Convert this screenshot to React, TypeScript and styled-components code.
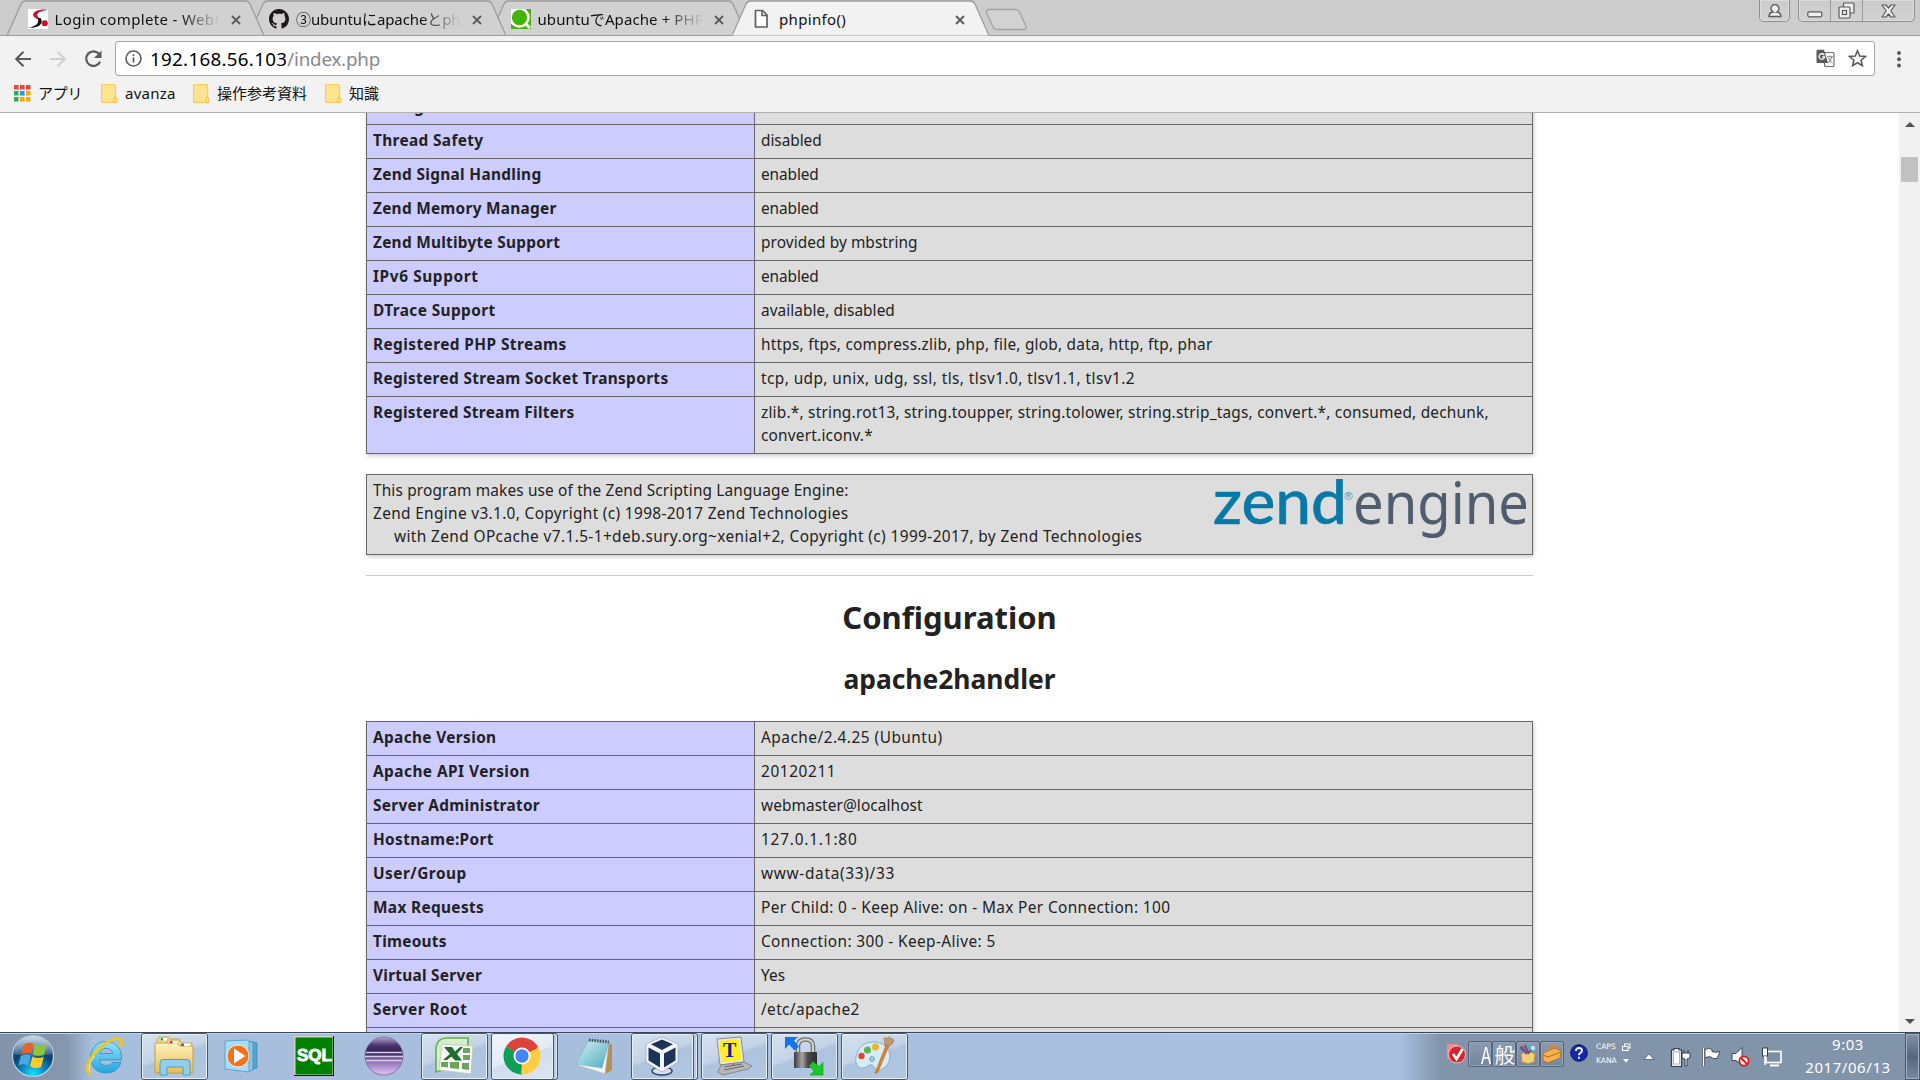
import React from "react";
import styled, { createGlobalStyle } from "styled-components";

const GlobalStyle = createGlobalStyle`
  * { box-sizing: border-box; }
  html, body { margin: 0; padding: 0; background: #fff; }
  body { width: 1920px; height: 1080px; overflow: hidden; font-family: "Noto Sans", "Noto Sans CJK JP", sans-serif; }
  svg { display: block; flex: none; }
`;

const Screen = styled.div`
  width: 1920px;
  height: 1080px;
  display: flex;
  flex-direction: column;
  overflow: hidden;
`;

/* ---------- tab strip ---------- */

const TabStrip = styled.div`
  height: 36px;
  flex: none;
  display: flex;
  align-items: flex-start;
  background: #cccccc;
  box-shadow: inset 0 -1px 0 #9c9c9c;
  padding-left: 7px;
`;

const TabBox = styled.div<{ $z: number }>`
  position: relative;
  z-index: ${(p) => p.$z};
  width: 257px;
  height: 36px;
  margin-right: -15.5px;
  display: flex;
  align-items: center;
  padding: 1px 0 0 20.5px;
`;

const TabShape = styled.svg`
  position: absolute;
  inset: 0;
  z-index: -1;
`;

const TabTitle = styled.div<{ $track: number; $fade: boolean }>`
  width: 165px;
  margin-left: 7px;
  overflow: hidden;
  white-space: nowrap;
  font-size: 15px;
  line-height: 30px;
  letter-spacing: ${(p) => p.$track}px;
  color: #111;
  mask-image: ${(p) => (p.$fade ? "linear-gradient(90deg, #000 76%, transparent 100%)" : "none")};
`;

const TabClose = styled.svg`
  margin: 2px 0 0 11px;
`;

const NewTab = styled.svg`
  margin: 8px 0 0 10px;
`;

const StripSpacer = styled.div`
  flex: 1;
`;

const WindowButtons = styled.div<{ $gap: number }>`
  display: flex;
  height: 22px;
  margin-right: ${(p) => p.$gap}px;
  border: 1px solid #8f8f8f;
  border-top: 0;
  border-radius: 0 0 5px 5px;
  background: linear-gradient(#cbcbcb, #d2d2d2);
  box-shadow: inset 0 0 0 1px #dcdcdc;
`;

const WindowButton = styled.div<{ $w: number; $line?: boolean }>`
  width: ${(p) => p.$w}px;
  display: flex;
  align-items: center;
  justify-content: center;
  border-left: ${(p) => (p.$line ? "1px solid #9a9a9a" : "0")};
`;

/* ---------- toolbar ---------- */

const Toolbar = styled.div`
  height: 40px;
  flex: none;
  display: flex;
  align-items: flex-start;
  background: #f2f2f2;
  padding: 5px 0 0 14px;
`;

const NavIcon = styled.svg`
  margin: 8px 17px 0 0;

  &:last-of-type {
    margin-right: 12px;
  }
`;

const NavIcons = styled.div`
  display: flex;
`;

const Omnibox = styled.div`
  width: 1760px;
  height: 35px;
  display: flex;
  align-items: center;
  border: 1px solid #a6a6a6;
  border-radius: 3px;
  background: #fff;
  padding: 0 7px 0 9px;
`;

const Url = styled.div`
  flex: 1;
  margin-left: 8px;
  font-size: 18.75px;
  line-height: 32px;
  color: #888;
  letter-spacing: -0.2px;
`;

const Host = styled.span`
  color: #000;
  letter-spacing: 0.3px;
`;

const TranslateIcon = styled.svg`
  margin-right: 13px;
`;

const MenuDots = styled.svg`
  margin: 8px 0 0 21px;
`;

const Bookmarks = styled.div`
  height: 37px;
  flex: none;
  display: flex;
  align-items: center;
  background: #f2f2f2;
  border-bottom: 1px solid #b0b0b0;
  padding: 0 0 2px 14px;
`;

const Bookmark = styled.div<{ $w: number; $track?: number }>`
  width: ${(p) => p.$w}px;
  display: flex;
  align-items: center;
  gap: 7px;
  white-space: nowrap;
  font-size: 15px;
  line-height: 24px;
  letter-spacing: ${(p) => p.$track ?? 0}px;
  color: #111;
`;

/* ---------- page ---------- */

const Viewport = styled.div`
  height: 919px;
  flex: none;
  display: flex;
  overflow: hidden;
  background: #fff;
`;

const Page = styled.div`
  flex: 1;
  height: 919px;
  overflow: hidden;
  display: flex;
  flex-direction: column;
  align-items: center;
`;

const Content = styled.div`
  width: 1167px;
  margin-top: -23px;
  flex: none;
  color: #222;
`;

const InfoTable = styled.div`
  border: 1px solid #666;
  border-bottom: 0;
  box-shadow: 1px 2px 4px #ccc;
  display: flex;
  flex-direction: column;
`;

const InfoRow = styled.div`
  display: flex;
  border-bottom: 1px solid #666;
`;

const Label = styled.div<{ $track: number }>`
  width: 388px;
  flex: none;
  background: #ccccff;
  border-right: 1px solid #666;
  padding: 4px 6px 6px;
  font-size: 15.4px;
  line-height: 23px;
  font-weight: 700;
  letter-spacing: ${(p) => p.$track}px;
`;

const Value = styled.div<{ $track: number }>`
  flex: 1;
  background: #dddddd;
  padding: 4px 6px 6px;
  font-size: 15.4px;
  line-height: 23px;
  letter-spacing: ${(p) => p.$track}px;
`;

const ZendBox = styled.div`
  display: flex;
  justify-content: space-between;
  height: 81px;
  margin: 20px 0;
  padding: 4px 6px;
  border: 1px solid #666;
  background: #dddddd;
  box-shadow: 1px 2px 4px #ccc;
`;

const ZendText = styled.div`
  display: flex;
  flex-direction: column;
`;

const ZendLine = styled.div<{ $track: number; $indent?: boolean }>`
  font-size: 15.4px;
  line-height: 23px;
  white-space: nowrap;
  letter-spacing: ${(p) => p.$track}px;
  padding-left: ${(p) => (p.$indent ? 21 : 0)}px;
`;

const Rule = styled.div`
  height: 1px;
  background: #ccc;
`;

const Heading = styled.h1`
  margin: 18px 0 0;
  font-size: 31px;
  line-height: 46px;
  font-weight: 700;
  text-align: center;
`;

const SubHeading = styled.h2`
  margin: 19px 0 22px;
  font-size: 26.4px;
  line-height: 40px;
  font-weight: 700;
  text-align: center;
`;

const ScrollTrack = styled.div`
  width: 21px;
  display: flex;
  flex-direction: column;
  align-items: center;
  justify-content: space-between;
  background: #f1f1f1;
  padding: 9px 0 8px;
`;

const ScrollTop = styled.div`
  display: flex;
  flex-direction: column;
  align-items: center;
  gap: 30px;
`;

const Thumb = styled.div`
  width: 17px;
  height: 25px;
  background: #c1c1c1;
`;

/* ---------- taskbar ---------- */

const Taskbar = styled.div`
  height: 48px;
  flex: none;
  display: flex;
  border-top: 1px solid #3a485c;
  box-shadow: inset 0 1px 0 #c5d2e2;
  background: linear-gradient(90deg, #8394aa 0, #8596ad 66px, #a7bfdc 92px, #a8c0de 1400px, #8194aa 1440px, #8194aa 100%);
`;

const StartSlot = styled.div`
  width: 71px;
  display: flex;
  align-items: center;
  padding: 0 0 1px 11px;
`;

const Slot = styled.div<{ $mode: "pinned" | "open" | "stack" }>`
  width: 67px;
  height: 47px;
  margin-right: 3px;
  display: flex;
  padding-right: ${(p) => (p.$mode === "stack" ? 4 : 0)}px;
  border: ${(p) => (p.$mode === "pinned" ? "1px solid transparent" : "1px solid #45566d")};
  border-radius: 3px;
  background: ${(p) => (p.$mode === "pinned" ? "none" : "#b9cce3")};
  box-shadow: ${(p) => (p.$mode === "pinned" ? "none" : "inset 0 0 0 1px #dfe9f4")};
`;

const SlotFace = styled.div<{ $tone: "none" | "open" | "stack" | "active" }>`
  flex: 1;
  display: flex;
  align-items: center;
  justify-content: center;
  padding: 0 2px 1px 0;
  border-radius: 2px;
  border: ${(p) => (p.$tone === "none" ? "0" : "1px solid #e6eef7")};
  box-shadow: ${(p) => (p.$tone === "stack" || p.$tone === "active" ? "1px 0 0 #45566d" : "none")};
  background: ${(p) =>
    p.$tone === "none"
      ? "none"
      : p.$tone === "active"
      ? "linear-gradient(160deg, #f2f6fb, #e2eaf4 50%, #d0dded 52%, #dce6f2)"
      : "linear-gradient(160deg, #d5e1ef, #c3d3e7 45%, #adc3de 50%, #b0c6e1)"};
`;

const TaskSpacer = styled.div`
  flex: 1;
`;

const ImeBar = styled.div`
  display: flex;
  align-items: center;
  height: 42px;
  width: 197px;
`;

const ImeKey = styled.div`
  width: 24px;
  height: 26px;
  display: flex;
  align-items: center;
  justify-content: flex-end;
  border: 1px solid #52647b;
  border-radius: 2px;
  box-shadow: inset 0 0 0 1px #93a4b9;
  background: linear-gradient(#8b9cb2, #73869d);
`;

const ImeGlyph = styled.span<{ $narrow?: boolean }>`
  color: #fff;
  font-family: "Noto Sans CJK JP", sans-serif;
  font-size: ${(p) => (p.$narrow ? 23 : 20.5)}px;
  line-height: 24px;
  transform: ${(p) => (p.$narrow ? "scaleX(0.72)" : "none")};
  transform-origin: right center;
`;

const ImeHelp = styled.svg`
  margin: 0 8px 2px 6px;
`;

const ImeLocks = styled.div`
  display: flex;
  flex-direction: column;
  color: #fff;
  font-family: "DejaVu Sans", sans-serif;
  font-size: 7.5px;
  line-height: 14px;
`;

const LockRow = styled.div`
  display: flex;
  align-items: center;
  justify-content: space-between;
  width: 35px;
`;

const Tray = styled.div`
  display: flex;
  align-items: center;
  width: 155px;
  padding-top: 1px;
`;

const TrayIcon = styled.svg<{ $gap: number }>`
  margin-right: ${(p) => p.$gap}px;
`;

const Clock = styled.div`
  width: 100px;
  display: flex;
  flex-direction: column;
  align-items: center;
  color: #fff;
  font-size: 15px;
  line-height: 23px;
  letter-spacing: 0.55px;
`;

const ShowDesktop = styled.div`
  width: 15px;
  height: 47px;
  margin-left: 7px;
  border: 1px solid #46566b;
  box-shadow: inset 0 0 0 1px #a5b3c5;
  background: linear-gradient(#8293a9, #55677e 50%, #788ba3);
`;

/* ---------- data ---------- */

type Row = { label: string; lt?: number; value: string; vt?: number };

const coreRows: Row[] = [
  { label: "Debug Build", value: "no" },
  { label: "Thread Safety", lt: 0.35, value: "disabled", vt: -0.05 },
  { label: "Zend Signal Handling", lt: 0.32, value: "enabled", vt: -0.1 },
  { label: "Zend Memory Manager", value: "enabled", vt: -0.1 },
  { label: "Zend Multibyte Support", value: "provided by mbstring", vt: 0.08 },
  { label: "IPv6 Support", lt: 0.6, value: "enabled", vt: -0.1 },
  { label: "DTrace Support", lt: 0.4, value: "available, disabled", vt: 0.05 },
  { label: "Registered PHP Streams", lt: 0.42, value: "https, ftps, compress.zlib, php, file, glob, data, http, ftp, phar", vt: 0.23 },
  { label: "Registered Stream Socket Transports", lt: 0.34, value: "tcp, udp, unix, udg, ssl, tls, tlsv1.0, tlsv1.1, tlsv1.2", vt: 0.42 },
  {
    label: "Registered Stream Filters",
    lt: 0.3,
    value:
      "zlib.*, string.rot13, string.toupper, string.tolower, string.strip_tags, convert.*, consumed, dechunk, convert.iconv.*",
    vt: 0.21,
  },
];

const apacheRows: Row[] = [
  { label: "Apache Version", lt: 0.36, value: "Apache/2.4.25 (Ubuntu)", vt: 0.49 },
  { label: "Apache API Version", lt: 0.46, value: "20120211", vt: 0.6 },
  { label: "Server Administrator", lt: 0.28, value: "webmaster@localhost", vt: 0.08 },
  { label: "Hostname:Port", lt: 0.34, value: "127.0.1.1:80", vt: 0.8 },
  { label: "User/Group", lt: 0.48, value: "www-data(33)/33", vt: 0.68 },
  { label: "Max Requests", lt: 0.34, value: "Per Child: 0 - Keep Alive: on - Max Per Connection: 100", vt: 0.36 },
  { label: "Timeouts", value: "Connection: 300 - Keep-Alive: 5", vt: 0.39 },
  { label: "Virtual Server", value: "Yes", vt: 0.1 },
  { label: "Server Root", lt: 0.44, value: "/etc/apache2", vt: 0.38 },
  { label: "Loaded Modules", value: "core" },
];

function Table({ rows }: { rows: Row[] }) {
  return (
    <InfoTable>
      {rows.map((r) => (
        <InfoRow key={r.label}>
          <Label $track={r.lt ?? 0.26}>{r.label}</Label>
          <Value $track={r.vt ?? 0.2}>{r.value}</Value>
        </InfoRow>
      ))}
    </InfoTable>
  );
}

/* ---------- tab icons ---------- */

const SIcon = () => (
  <svg width="20" height="20" viewBox="0 0 20 20">
    <rect width="20" height="20" fill="#fff" />
    <path d="M19.500 .8C14 .2 7.500 1 5.500 4.500c-1.300 2.800 1.500 4 3.500 5.500h3C10.500 8.500 8.500 7 9.300 5.300 10.500 2.800 15 1.800 19.500.8z" fill="#c8102e" />
    <path d="M9.500 9h3c2 2.500 1.500 5.500-1 7.500-2.800 2-7 2.500-11.500 2.300 4-.8 7.500-1.800 9-3.800 1.400-2 1.600-3.800.5-6z" fill="#111" />
    <circle cx="16.800" cy="14.300" r="3" fill="#c8102e" />
  </svg>
);

const GitHubIcon = () => (
  <svg width="20" height="20" viewBox="0 0 16 16">
    <path
      fill="#1b1817"
      d="M8 0C3.580 0 0 3.580 0 8c0 3.540 2.290 6.530 5.470 7.590.4.070.55-.17.55-.38 0-.19-.01-.82-.01-1.490-2.010.37-2.530-.49-2.690-.94-.09-.23-.48-.94-.82-1.130-.28-.15-.68-.52-.01-.53.63-.01 1.080.58 1.230.82.72 1.210 1.870.87 2.330.66.07-.52.28-.87.51-1.070-1.780-.2-3.640-.89-3.640-3.950 0-.87.31-1.590.82-2.150-.08-.2-.36-1.020.08-2.120 0 0 .67-.21 2.200.82.64-.18 1.320-.27 2-.27s1.360.09 2 .27c1.530-1.040 2.200-.82 2.200-.82.44 1.100.16 1.920.08 2.120.51.56.82 1.270.82 2.150 0 3.070-1.870 3.750-3.650 3.950.29.25.54.73.54 1.480 0 1.070-.01 1.930-.01 2.200 0 .21.15.46.55.38A8.010 8.010 0 0 0 16 8c0-4.420-3.580-8-8-8z"
    />
  </svg>
);

const QiitaIcon = () => (
  <svg width="20" height="20" viewBox="0 0 20 20">
    <rect width="20" height="20" fill="#45b30b" />
    <circle cx="8.500" cy="8.500" r="9" fill="#45b30b" stroke="#fff" strokeWidth="2.600" />
    <path d="M14 14l5 5" stroke="#fff" strokeWidth="3" />
    <rect width="2" height="2" fill="#fff" />
  </svg>
);

const PageIcon = () => (
  <svg width="20" height="20" viewBox="0 0 20 20">
    <path d="M3.500 1.500h7L15 6v12H3.500z" fill="#fff" stroke="#5f5f5f" strokeWidth="1.700" strokeLinejoin="round" />
    <path d="M10 1.500V6.500h5" fill="none" stroke="#5f5f5f" strokeWidth="1.500" />
  </svg>
);

const tabs = [
  { title: "Login complete - WebMail", Icon: SIcon, track: 0.35 },
  { title: "③ubuntuにapacheとphpを", Icon: GitHubIcon, track: -0.1 },
  { title: "ubuntuでApache + PHP7", Icon: QiitaIcon, track: 0.1 },
  { title: "phpinfo()", Icon: PageIcon, track: 0.33, active: true },
];

function Tab({ tab, z }: { tab: (typeof tabs)[number]; z: number }) {
  const path = "M0 35.500L14 4Q15.500 1 18.500 1H238.500Q241.500 1 243 4L257 35.500";
  return (
    <TabBox $z={tab.active ? 10 : z}>
      <TabShape width="257" height="36">
        <path d={path} fill={tab.active ? "#f2f2f2" : "#d1d1d1"} stroke="#9c9c9c" strokeWidth="1.300" />
        {!tab.active && <path d="M0 35.500H257" stroke="#9c9c9c" />}
      </TabShape>
      <tab.Icon />
      <TabTitle $track={tab.track} $fade={!tab.active}>
        {tab.title}
      </TabTitle>
      <TabClose width="10" height="10" viewBox="0 0 10 10">
        <path d="M1 1l8 8M9 1L1 9" stroke="#5a5a5a" strokeWidth="1.800" />
      </TabClose>
    </TabBox>
  );
}

const Folder = () => (
  <svg width="17" height="19" viewBox="0 0 17 19">
    <rect x=".6" y=".6" width="14" height="17.800" rx="1" fill="#ffe391" stroke="#f6cf5c" strokeWidth="1.200" />
    <path d="M13 13.500h1.500q1.500 0 1.500 1.500v3.400h-3z" fill="#ffe391" stroke="#eec04a" />
  </svg>
);

const appColors = ["#f44336", "#f44336", "#f44336", "#34a853", "#2196f3", "#ffa800", "#34a853", "#ffa800", "#ffa800"];

/* ---------- taskbar icons ---------- */

const StartOrb = () => (
  <svg width="44" height="44" viewBox="0 0 44 44">
    <defs>
      <radialGradient id="orb" cx=".5" cy=".95" r=".95">
        <stop offset="0" stopColor="#12e6ff" />
        <stop offset=".32" stopColor="#0a86bd" />
        <stop offset=".6" stopColor="#0c3f6d" />
        <stop offset="1" stopColor="#3f6f98" />
      </radialGradient>
      <linearGradient id="gloss" x2="0" y2="1">
        <stop offset="0" stopColor="#fff" stopOpacity=".75" />
        <stop offset="1" stopColor="#fff" stopOpacity=".12" />
      </linearGradient>
    </defs>
    <circle cx="22" cy="22" r="20.500" fill="url(#orb)" stroke="#b7d0e2" strokeWidth="1.200" />
    <path d="M3 20a19 18 0 0 1 38 0q-19 5-38 0z" fill="url(#gloss)" />
    <path d="M12.500 11q5-4 10-1.200l-2.300 10.200q-5-2.500-10 .5z" fill="#e8622a" />
    <path d="M23.800 10.500q5 2.500 12-.5l-2.600 10.500q-6 2.800-11.400-.3z" fill="#8cc63e" />
    <path d="M9.700 22q5-3 10-.2l-2.200 10q-4.500-3-10-.3z" fill="#4aa8e0" />
    <path d="M21.300 22.500q5 3 11.400.3l-2.500 10.200q-5.500 2.500-11.200-.8z" fill="#ffc928" />
  </svg>
);

const IEIcon = () => (
  <svg width="40" height="40" viewBox="0 0 40 40">
    <defs>
      <linearGradient id="ie" x2="0" y2="1">
        <stop offset="0" stopColor="#8fe4fb" />
        <stop offset="1" stopColor="#24a5dd" />
      </linearGradient>
    </defs>
    <path
      d="M22 5.500c9 0 15.500 6.500 15.500 15.500v3H15.500c.5 3.500 3 5.500 6.800 5.500 3 0 5-1 6.200-3h8.500c-2 6.500-7.500 10.500-15 10.500C12.500 37 6.500 30.500 6.500 21.500S13 5.500 22 5.500zM15.700 17.500h13c-.5-3.300-3-5.200-6.500-5.200s-6 2-6.500 5.200z"
      fill="url(#ie)"
      stroke="#2c8fc4"
      strokeWidth=".8"
    />
    <path d="M5.500 37.500C1.500 35 3 28 8.500 20 15.500 10 28 1.800 35 2.700c3.200.5 3.200 4 1.500 8" fill="none" stroke="#f5c518" strokeWidth="2.800" strokeLinecap="round" />
    <path d="M6 35.500C4 32 6 26 10.500 20" fill="none" stroke="#fff0a0" strokeWidth="1" />
  </svg>
);

const ExplorerIcon = () => (
  <svg width="42" height="40" viewBox="0 0 42 40">
    <defs>
      <linearGradient id="fold" x2="0" y2="1">
        <stop offset="0" stopColor="#fdf3bd" />
        <stop offset="1" stopColor="#e5bd55" />
      </linearGradient>
    </defs>
    <path d="M4 4l2-3h10l2 2h9v6H4z" fill="#f0d686" stroke="#bd9c43" strokeWidth=".7" />
    <path d="M14 4h12l2 3h11v5H14z" fill="#f5df96" stroke="#bd9c43" strokeWidth=".7" />
    <path d="M2 8q0-1 1-1h21l3 3h12q1 0 1 1v25q0 1-1 1H3q-1 0-1-1z" fill="url(#fold)" stroke="#c09f48" />
    <rect x="8" y="2" width="6" height="2.500" fill="#fff" /><rect x="8" y="2" width="2" height="2.500" fill="#28a040" />
    <rect x="17" y="5" width="7" height="2.500" fill="#fff" /><rect x="17" y="5" width="2.500" height="2.500" fill="#d33" />
    <rect x="28" y="7.500" width="9" height="2.500" fill="#fff" /><rect x="28" y="7.500" width="3" height="2.500" fill="#2878c8" />
    <path d="M7 39V27q0-3.500 3-3.500h24q3 0 3 3.500v12h-7v-8H14v8z" fill="#93cfea" stroke="#4f9cc8" />
  </svg>
);

const MediaIcon = () => (
  <svg width="42" height="36" viewBox="0 0 42 36">
    <path d="M24 3l10 2v25l-10 3z" fill="#5aa3cf" stroke="#3b83b3" strokeWidth=".7" />
    <path d="M24 3l6 1v28l-6 2z" fill="#8cc8e6" stroke="#3b83b3" strokeWidth=".7" />
    <path d="M2 3l24-1v32L2 31z" fill="#a9dcf2" stroke="#58a5cf" />
    <circle cx="15" cy="18" r="11" fill="#f2711c" stroke="#fff" strokeWidth=".8" />
    <path d="M11 10.500v15L22.500 18z" fill="#fff" />
  </svg>
);

const SqlIcon = () => (
  <svg width="40" height="40" viewBox="0 0 40 40">
    <rect width="40" height="40" fill="#111" />
    <rect width="39" height="39" fill="#d5d2c8" />
    <rect x="1.500" y="1.500" width="37" height="37" fill="#008000" />
    <text x="3" y="25" textLength="35" lengthAdjust="spacingAndGlyphs" fontFamily="Liberation Sans, sans-serif" fontWeight="700" fontSize="16" fill="#fff" stroke="#fff" strokeWidth=".8">SQL</text>
  </svg>
);

const EclipseIcon = () => (
  <svg width="40" height="40" viewBox="0 0 40 40">
    <defs>
      <linearGradient id="ecl" x2="0" y2="1">
        <stop offset="0" stopColor="#b7a9d0" />
        <stop offset=".22" stopColor="#4a3570" />
        <stop offset=".4" stopColor="#2f1d55" />
        <stop offset=".62" stopColor="#8a6bb5" />
        <stop offset="1" stopColor="#e2c4f5" />
      </linearGradient>
    </defs>
    <circle cx="20" cy="20" r="19" fill="url(#ecl)" stroke="#7b6699" strokeWidth=".8" />
    <path d="M2 16.500h36M1 20.500h38M2 24.500h36" stroke="#d9cdea" strokeWidth="1.300" />
  </svg>
);

const ExcelIcon = () => (
  <svg width="40" height="40" viewBox="0 0 40 40">
    <path d="M2 36V12Q3 2 13 2h21v24z" fill="#d5efcc" stroke="#63b04a" strokeWidth="1.600" />
    <path d="M8 8l31 2-2 28-32-4z" fill="#f7faf4" stroke="#b5c5ae" strokeWidth=".8" />
    <path d="M10 11h8l3 4.500 5-4.500h3l-6 7 5 6.500h-7l-3.500-4-4.500 3.500H9l7-6z" fill="#1e6b2e" />
    <path d="M29 12h7v5h-7zM29 19h7v5h-7zM7 26h7v5.500l-7-.8zM16 26h9v7l-9-1zM28 27h7v7l-7-1z" fill="#6fa35c" />
  </svg>
);

const ChromeIcon = () => (
  <svg width="38" height="38" viewBox="0 0 38 38">
    <path d="M19 19L2.980 9.750A18.500 18.500 0 0 1 35.020 9.750z" fill="#db4437" />
    <path d="M19 19V37.500A18.500 18.500 0 0 1 2.980 9.750z" fill="#0f9d58" />
    <path d="M19 19L35.020 9.750A18.500 18.500 0 0 1 19 37.500z" fill="#ffcd40" />
    <path d="M19 10.500H35.400L27 15z" fill="#db4437" />
    <path d="M11.600 23.200L3 9.700 12 15z" fill="#0f9d58" />
    <path d="M26.400 23.200L18 37.500 19 26z" fill="#ffcd40" />
    <circle cx="19" cy="19" r="8.500" fill="#fff" />
    <circle cx="19" cy="19" r="6.700" fill="#4285f4" />
  </svg>
);

const NotepadIcon = () => (
  <svg width="40" height="40" viewBox="0 0 40 40">
    <defs>
      <linearGradient id="note" x2="1" y2="1">
        <stop offset="0" stopColor="#d9f4f8" />
        <stop offset="1" stopColor="#4ba9bd" />
      </linearGradient>
    </defs>
    <path d="M34 7l4 2v25l-7 4z" fill="#b98f4e" />
    <path d="M15 4l20 2-4 32-28-9z" fill="#f2f4f5" stroke="#aab" strokeWidth=".6" />
    <path d="M15 4l20 2-7 26L2 28z" fill="url(#note)" stroke="#6fb3c2" strokeWidth=".6" />
    <path d="M15 4l20 2" stroke="#4a5560" strokeWidth="3" strokeDasharray="1.500 1.200" />
  </svg>
);

const VBoxIcon = () => (
  <svg width="38" height="40" viewBox="0 0 38 40">
    <ellipse cx="19" cy="35" rx="10" ry="4" fill="#d6dfeb" stroke="#2b4575" strokeWidth="1.500" />
    <path d="M19 1l16 7v18L19 36 3 26V8z" fill="#f2f5fa" stroke="#8b9bb5" strokeWidth=".6" />
    <path d="M19 3.500l11 4.800-11 5.700L8 8.300z" fill="#1c3457" />
    <path d="M5.500 11.500L17 17.500v14L5.500 24.500zM32.500 11.500L21 17.500v14l11.500-7z" fill="#1c3457" />
  </svg>
);

const TeraIcon = () => (
  <svg width="38" height="40" viewBox="0 0 38 40">
    <path d="M2 3l24-2 3 25-24 3z" fill="#e8e8e2" stroke="#8b8b8b" />
    <path d="M4 5l20-2 2.500 21-20 2.500z" fill="#ffee1f" />
    <text x="8" y="21" fontFamily="Liberation Serif, serif" fontWeight="700" fontSize="20" fill="#1a1aa8">T</text>
    <path d="M6 29l23-3 8 4-4 3-25 6-5-3z" fill="#b7b7b7" stroke="#7a7a7a" strokeWidth=".8" />
    <path d="M9 31l18-3M9 34l20-4" stroke="#666" strokeWidth="1" />
    <circle cx="18" cy="29" r="1" fill="#e33" />
  </svg>
);

const WinScpIcon = () => (
  <svg width="42" height="40" viewBox="0 0 42 40">
    <defs>
      <linearGradient id="lock">
        <stop offset="0" stopColor="#3a3a3a" />
        <stop offset=".35" stopColor="#a5a5a5" />
        <stop offset=".6" stopColor="#4a4a4a" />
        <stop offset="1" stopColor="#2d2d2d" />
      </linearGradient>
    </defs>
    <path d="M15 17V10q0-6.500 7.500-6.500T30 10v7" fill="none" stroke="#6f6f6f" strokeWidth="4.500" />
    <path d="M15 17V10q0-6.500 7.500-6.500T30 10v7" fill="none" stroke="#d5d5d5" strokeWidth="2" />
    <rect x="11" y="16" width="23" height="16" rx="1" fill="url(#lock)" />
    <path d="M2 1h13l-4 3.500 5 6-4.500 4-5.500-6L2 13z" fill="#1473f0" />
    <path d="M40 39H27l4-4-5-5 4-4.500 6 5 4-4z" fill="#19c824" stroke="#0f9a1a" strokeWidth=".6" />
  </svg>
);

const PaintIcon = () => (
  <svg width="42" height="40" viewBox="0 0 42 40">
    <path d="M20 6c10 0 17 6 17 14s-6 14-12 14c-4 0-3-4-6-5-4-1-6 4-11 3-4-1-6-5-5-11C4 12 11 6 20 6z" fill="#d5ecf7" stroke="#7fb3cf" />
    <circle cx="8.500" cy="20" r="3.200" fill="#e2452d" />
    <circle cx="14.500" cy="14" r="3.500" fill="#58b947" />
    <circle cx="22.500" cy="11" r="3.500" fill="#f7b220" />
    <circle cx="19" cy="23" r="2.500" fill="#a8c6da" stroke="#7fa9c3" />
    <path d="M33 9l3 1-11 26q-2 2-3 1z" fill="#e08430" stroke="#a85b18" strokeWidth=".5" />
    <path d="M31 2q4 1 5-1l5 3q-1 5-5 6l-4-1z" fill="#c49a6c" stroke="#94704a" strokeWidth=".6" />
  </svg>
);

type SlotDef = { Icon: () => React.ReactElement; mode: "pinned" | "open" | "stack"; tone: "none" | "open" | "stack" | "active" };

const slots: SlotDef[] = [
  { Icon: IEIcon, mode: "pinned", tone: "none" },
  { Icon: ExplorerIcon, mode: "open", tone: "open" },
  { Icon: MediaIcon, mode: "pinned", tone: "none" },
  { Icon: SqlIcon, mode: "pinned", tone: "none" },
  { Icon: EclipseIcon, mode: "pinned", tone: "none" },
  { Icon: ExcelIcon, mode: "open", tone: "open" },
  { Icon: ChromeIcon, mode: "stack", tone: "active" },
  { Icon: NotepadIcon, mode: "pinned", tone: "none" },
  { Icon: VBoxIcon, mode: "stack", tone: "stack" },
  { Icon: TeraIcon, mode: "open", tone: "open" },
  { Icon: WinScpIcon, mode: "open", tone: "open" },
  { Icon: PaintIcon, mode: "open", tone: "open" },
];

const ZendLogo = () => (
  <svg width="316" height="66" viewBox="0 0 316 66">
    <text x="3" y="45" fontFamily="Lato, sans-serif" fontSize="61" fontWeight="500" textLength="134" lengthAdjust="spacingAndGlyphs" fill="#0679a9" stroke="#0679a9" strokeWidth=".5">zend</text>
    <text x="133" y="21" fontFamily="DejaVu Sans, sans-serif" fontSize="11" fill="#4b9cc0">®</text>
    <text x="143" y="45" fontFamily="Noto Sans, sans-serif" fontSize="58" textLength="176" lengthAdjust="spacingAndGlyphs" fill="#4f5d6f">engine</text>
  </svg>
);

export default function App() {
  return (
    <Screen>
      <GlobalStyle />
      <TabStrip>
        {tabs.map((t, i) => (
          <Tab key={t.title} tab={t} z={5 - i} />
        ))}
        <NewTab width="48" height="24" viewBox="0 0 48 24">
          <path d="M6 1.500H32Q35 1.500 36.500 4L43 18.500Q43.500 21.500 41 21.500H14Q11 21.500 10 19L3.500 4.500Q3 1.500 6 1.500z" fill="#d2d2d2" stroke="#a3a3a3" strokeWidth="1.300" />
        </NewTab>
        <StripSpacer />
        <WindowButtons $gap={8}>
          <WindowButton $w={29}>
            <svg width="14" height="14" viewBox="0 0 14 14">
              <path d="M1 12.500q0-4 4-4.500a4 4 0 1 1 4 0q4 .5 4 4.500z" fill="#eee" stroke="#5a5a5a" strokeWidth="1.300" />
            </svg>
          </WindowButton>
        </WindowButtons>
        <WindowButtons $gap={5}>
          <WindowButton $w={31}>
            <svg width="16" height="18" viewBox="0 0 16 18">
              <rect x=".8" y="9.800" width="14" height="5" rx="1.500" fill="#eee" stroke="#5a5a5a" strokeWidth="1.200" />
            </svg>
          </WindowButton>
          <WindowButton $w={32} $line>
            <svg width="17" height="17" viewBox="0 0 17 17">
              <rect x="5.500" y="1" width="10.500" height="10" rx="1" fill="#eee" stroke="#5a5a5a" strokeWidth="1.200" />
              <rect x="1" y="5" width="11" height="11" rx="1" fill="#eee" stroke="#5a5a5a" strokeWidth="1.200" />
              <rect x="4.500" y="8.500" width="4" height="4" fill="#eee" stroke="#5a5a5a" strokeWidth="1.200" />
            </svg>
          </WindowButton>
          <WindowButton $w={52} $line>
            <svg width="15" height="14" viewBox="0 0 15 14">
              <path d="M1 1h4l2.500 3L10 1h4L9.700 7 14 13h-4l-2.500-3L5 13H1l4.300-6z" fill="#eee" stroke="#5a5a5a" strokeWidth="1.200" strokeLinejoin="round" />
            </svg>
          </WindowButton>
        </WindowButtons>
      </TabStrip>

      <Toolbar>
        <NavIcons>
          <NavIcon width="18" height="20" viewBox="0 0 18 20">
            <path d="M17 10H3M9.500 2.700L2.200 10l7.300 7.300" fill="none" stroke="#5a5a5a" strokeWidth="2.100" />
          </NavIcon>
          <NavIcon width="18" height="20" viewBox="0 0 18 20">
            <path d="M1 10h14M8.500 2.700l7.300 7.300-7.300 7.300" fill="none" stroke="#d0d0d0" strokeWidth="2.100" />
          </NavIcon>
          <NavIcon width="19" height="20" viewBox="0 0 19 20">
            <path d="M15.300 5.200A7.300 7.300 0 1 0 16.100 12.800" fill="none" stroke="#5a5a5a" strokeWidth="2.200" />
            <path d="M17.500 1.500v7.500H10z" fill="#5a5a5a" />
          </NavIcon>
        </NavIcons>
        <Omnibox>
          <svg width="17" height="17" viewBox="0 0 17 17">
            <circle cx="8.500" cy="8.500" r="7.500" fill="none" stroke="#5a5a5a" strokeWidth="1.600" />
            <path d="M8.500 7.500v5M8.500 4.300v1.700" stroke="#5a5a5a" strokeWidth="1.700" />
          </svg>
          <Url>
            <Host>192.168.56.103</Host>/index.php
          </Url>
          <TranslateIcon width="19" height="19" viewBox="0 0 19 19">
            <rect x="8.500" y="3.500" width="9.500" height="14" rx="1" fill="#fff" stroke="#6a6a6a" strokeWidth="1.100" />
            <path d="M1.500.8H8L12 14H1.500Q.5 14 .5 13V1.800Q.5.8 1.500.8z" fill="#5a5a5a" />
            <path d="M8.300 6.200A2.800 2.800 0 1 0 8.600 8H6.300" fill="none" stroke="#fff" strokeWidth="1.300" />
            <path d="M11 7.800h6M14 6.500v1.300M15.800 8q-1 4-4 6M12.500 9q1 3 4 5" fill="none" stroke="#777" strokeWidth="1" />
          </TranslateIcon>
          <svg width="19" height="19" viewBox="0 0 19 19">
            <path d="M9.500 1.800l2.200 5.200 5.700.5-4.300 3.700 1.300 5.500-4.900-2.900-4.900 2.900 1.300-5.500L1.600 7.500l5.700-.5z" fill="none" stroke="#5a5a5a" strokeWidth="1.600" />
          </svg>
        </Omnibox>
        <MenuDots width="6" height="20" viewBox="0 0 6 20">
          <circle cx="3" cy="4" r="2" fill="#5a5a5a" />
          <circle cx="3" cy="10.300" r="2" fill="#5a5a5a" />
          <circle cx="3" cy="16.600" r="2" fill="#5a5a5a" />
        </MenuDots>
      </Toolbar>

      <Bookmarks>
        <Bookmark $w={87} $track={-0.3}>
          <svg width="17" height="17" viewBox="0 0 17 17">
            {appColors.map((c, i) => (
              <rect key={i} x={(i % 3) * 6} y={Math.floor(i / 3) * 6} width="4.500" height="4.500" fill={c} />
            ))}
          </svg>
          アプリ
        </Bookmark>
        <Bookmark $w={92} $track={0.25}><Folder />avanza</Bookmark>
        <Bookmark $w={132}><Folder />操作参考資料</Bookmark>
        <Bookmark $w={80}><Folder />知識</Bookmark>
      </Bookmarks>

      <Viewport>
        <Page>
          <Content>
            <Table rows={coreRows} />
            <ZendBox>
              <ZendText>
                <ZendLine $track={0.15}>This program makes use of the Zend Scripting Language Engine:</ZendLine>
                <ZendLine $track={0.34}>Zend Engine v3.1.0, Copyright (c) 1998-2017 Zend Technologies</ZendLine>
                <ZendLine $track={0.39} $indent>
                  with Zend OPcache v7.1.5-1+deb.sury.org~xenial+2, Copyright (c) 1999-2017, by Zend Technologies
                </ZendLine>
              </ZendText>
              <ZendLogo />
            </ZendBox>
            <Rule />
            <Heading>Configuration</Heading>
            <SubHeading>apache2handler</SubHeading>
            <Table rows={apacheRows} />
          </Content>
        </Page>
        <ScrollTrack>
          <ScrollTop>
            <svg width="10" height="5"><path d="M0 5L5 0l5 5z" fill="#505050" /></svg>
            <Thumb />
          </ScrollTop>
          <svg width="10" height="5"><path d="M0 0h10L5 5z" fill="#505050" /></svg>
        </ScrollTrack>
      </Viewport>

      <Taskbar>
        <StartSlot><StartOrb /></StartSlot>
        {slots.map(({ Icon, mode, tone }, i) => (
          <Slot key={i} $mode={mode}>
            <SlotFace $tone={tone}><Icon /></SlotFace>
          </Slot>
        ))}
        <TaskSpacer />
        <ImeBar>
          <svg width="22" height="22" viewBox="0 0 22 22">
            <path d="M1 1h10l5 5v10H1z" fill="#f08d92" />
            <circle cx="11" cy="11.500" r="8.500" fill="#d8232f" stroke="#f4b8bb" />
            <path d="M7 11l3.500 5L16.500 6" fill="none" stroke="#fff" strokeWidth="2.600" />
          </svg>
          <ImeKey><ImeGlyph $narrow>A</ImeGlyph></ImeKey>
          <ImeKey><ImeGlyph>般</ImeGlyph></ImeKey>
          <ImeKey>
            <svg width="22" height="22" viewBox="0 0 22 22">
              <path d="M4 11q7-4 14 0l-1 8q-6 3-12 0z" fill="#f4cf7a" stroke="#b98a2c" strokeWidth=".7" />
              <path d="M3 4l7 7M8 2l3 8" stroke="#2a63b5" strokeWidth="2" />
              <path d="M5 3l5 8" stroke="#d33" strokeWidth="1.600" />
              <circle cx="16" cy="5" r="3" fill="#bfe2f7" stroke="#5e93bb" />
              <path d="M14 7l-3 4" stroke="#555" strokeWidth="1.500" />
            </svg>
          </ImeKey>
          <ImeKey>
            <svg width="22" height="22" viewBox="0 0 22 22">
              <path d="M7 8q0-4 4-5t5 2v2" fill="none" stroke="#e08a1e" strokeWidth="1.800" />
              <path d="M2 10l12-5 6 3-1 7-13 5-4-3z" fill="#f6b14c" stroke="#b5701a" strokeWidth=".8" />
              <path d="M2 12l5 2 13-5" fill="none" stroke="#b5701a" strokeWidth="1" />
            </svg>
          </ImeKey>
          <ImeHelp width="18" height="18" viewBox="0 0 18 18">
            <circle cx="9" cy="9" r="8.300" fill="#1526b4" stroke="#0a1460" />
            <path d="M6 7q0-3 3-3t3 2.600q0 1.400-1.500 2.200T9 11.300M9 12.800v2" fill="none" stroke="#fff" strokeWidth="1.900" />
          </ImeHelp>
          <ImeLocks>
            <LockRow>
              CAPS
              <svg width="9" height="9" viewBox="0 0 9 9">
                <rect x="2.500" y="1" width="5.500" height="4" fill="none" stroke="#fff" />
                <rect x=".5" y="3.500" width="5.500" height="4" fill="#8194aa" stroke="#fff" />
              </svg>
            </LockRow>
            <LockRow>
              KANA
              <svg width="9" height="4" viewBox="0 0 9 4"><path d="M1 0h6L4 3.500z" fill="#fff" /></svg>
            </LockRow>
          </ImeLocks>
        </ImeBar>
        <Tray>
          <TrayIcon $gap={15} width="12" height="8" viewBox="0 0 12 8">
            <path d="M1 6.500L6 1l5 5.500z" fill="#fff" stroke="#4a5a70" strokeWidth=".8" />
          </TrayIcon>
          <TrayIcon $gap={10} width="21" height="22" viewBox="0 0 21 22">
            <path d="M4 2.500h5V4h2.500v16.500h-10V4H4z" fill="#f3f5f7" stroke="#333c48" strokeWidth="1.200" />
            <path d="M3.500 6h6v12h-6z" fill="#fff" stroke="#8a97a6" strokeWidth=".7" />
            <path d="M14 4v3M18 4v3M12 7h8v4q-1 2-3 2v7h-2v-7q-3 0-3-2z" fill="#fff" stroke="#333c48" strokeWidth="1" />
          </TrayIcon>
          <TrayIcon $gap={9} width="21" height="22" viewBox="0 0 21 22">
            <path d="M2.500 2v18" stroke="#333c48" strokeWidth="3" />
            <path d="M4 3.500q4-2.500 7 0v2q4 1.500 8 0l-3 7q-4 1-6-1.500-3-1-6 1z" fill="#fff" stroke="#333c48" strokeWidth=".9" />
            <path d="M2.500 2v18" stroke="#fff" strokeWidth="1.500" />
          </TrayIcon>
          <TrayIcon $gap={11} width="19" height="22" viewBox="0 0 19 22">
            <path d="M1 7.500h4L11 1.500v18l-6-5H1z" fill="#f4f6f8" stroke="#333c48" strokeWidth=".9" />
            <circle cx="13" cy="15" r="4.600" fill="#fff" stroke="#e01818" strokeWidth="1.800" />
            <path d="M10 12l6 6" stroke="#e01818" strokeWidth="1.800" />
          </TrayIcon>
          <TrayIcon $gap={0} width="21" height="22" viewBox="0 0 21 22">
            <rect x="5" y="5.500" width="15" height="11" fill="#7c8ea5" stroke="#fff" strokeWidth="1.600" />
            <path d="M9 19.500h9" stroke="#fff" strokeWidth="2" />
            <rect x="1.500" y="2" width="5" height="8" fill="#fff" stroke="#333c48" />
            <path d="M4 10v9" stroke="#fff" strokeWidth="1.500" />
          </TrayIcon>
        </Tray>
        <Clock>
          <span>9:03</span>
          <span>2017/06/13</span>
        </Clock>
        <ShowDesktop />
      </Taskbar>
    </Screen>
  );
}
